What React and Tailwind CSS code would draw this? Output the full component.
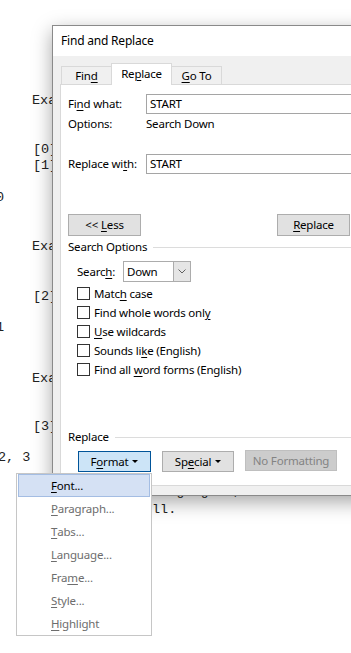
import React from "react";

const U = ({ children }) => (
  <span className="underline underline-offset-[2px] decoration-1">{children}</span>
);

const Check = ({ children }) => (
  <div className="flex items-center h-[19px]">
    <div className="w-[13px] h-[13px] border border-[#333333] bg-white" />
    <span className="ml-[4px]">{children}</span>
  </div>
);

const Caret = () => (
  <svg width="6" height="3" viewBox="0 0 6 3" className="ml-[4px]">
    <path d="M0 0h6L3 3z" fill="#000" />
  </svg>
);

function Document() {
  return (
    <div className="flex flex-col pt-[93px] font-['Liberation_Mono',monospace] text-[13.5px] leading-[16px] text-[#222] whitespace-pre">
      <div className="h-[16px] ml-[32px]">Exa</div>
      <div className="h-[16px] ml-[33px] mt-[33px]">[0]</div>
      <div className="h-[16px] ml-[33px]">[1]</div>
      <div className="h-[16px] ml-[-4px] mt-[16px]">0</div>
      <div className="h-[16px] ml-[32px] mt-[33px]">Exa</div>
      <div className="h-[16px] ml-[33px] mt-[34px]">[2]</div>
      <div className="h-[16px] ml-[-4px] mt-[15px]">1</div>
      <div className="h-[16px] ml-[32px] mt-[35px]">Exa</div>
      <div className="h-[16px] ml-[33px] mt-[32px]">[3]</div>
      <div className="h-[16px] ml-[-2px] mt-[15px]">2, 3</div>
      <div className="h-[16px] ml-[152px] mt-[18px]">language 0,</div>
      <div className="h-[16px] ml-[152px] mt-[2px]">ll.</div>
    </div>
  );
}

function Dialog() {
  return (
    <div className="absolute left-[52px] top-[25px] w-[330px] h-[471px] border border-[#8a8a8a] bg-[#f0f0f0] shadow-[0_6px_18px_rgba(0,0,0,0.35)] flex flex-col font-['Noto_Sans',sans-serif] text-[11.5px] tracking-[-0.2px] text-black">
      <div className="h-[30px] bg-white flex items-center pl-[8px] text-[12px]">Find and Replace</div>
      <div className="pt-[7px] flex flex-col">
        <div className="flex items-end ml-[8px] h-[21px]">
          <div className="w-[50px] h-[18px] border-l border-t border-[#d9d9d9] flex items-center justify-center">
            Fin<U>d</U>
          </div>
          <div className="relative z-10 w-[61px] h-[22px] -mb-px bg-white border border-b-0 border-[#d9d9d9] flex items-center justify-center pb-[2px]">
            Re<U>p</U>lace
          </div>
          <div className="w-[50px] h-[18px] border-t border-r border-[#d9d9d9] flex items-center justify-center">
            <U>G</U>o To
          </div>
        </div>
        <div className="ml-[7px] mr-[8px] h-[402px] bg-white border border-[#d9d9d9] pl-[7px] pt-[9px] flex flex-col">
          <div className="flex items-center h-[20px]">
            <span className="w-[78px]">Fi<U>n</U>d what:</span>
            <div className="flex-1 h-[20px] border border-[#a5a5a5] flex items-center pl-[3px]">START</div>
          </div>
          <div className="flex items-center h-[16px] mt-[2px]">
            <span className="w-[78px]">Options:</span>
            <span>Search Down</span>
          </div>
          <div className="flex items-center h-[20px] mt-[22px]">
            <span className="w-[78px]">Replace wi<U>t</U>h:</span>
            <div className="flex-1 h-[20px] border border-[#a5a5a5] flex items-center pl-[3px]">START</div>
          </div>
          <div className="flex mt-[40px]">
            <div className="w-[73px] h-[22px] bg-[#e1e1e1] border border-[#adadad] flex items-center justify-center">
              &lt;&lt; <span className="ml-[3px]"><U>L</U>ess</span>
            </div>
            <div className="ml-[136px] w-[73px] h-[22px] bg-[#e1e1e1] border border-[#adadad] flex items-center justify-center">
              <U>R</U>eplace
            </div>
          </div>
          <div className="flex items-center h-[16px] mt-[3px]">
            <span>Search Options</span>
            <div className="flex-1 h-px bg-[#dcdcdc] ml-[6px]" />
          </div>
          <div className="flex items-center h-[21px] mt-[6px] pl-[9px]">
            <span className="w-[46px]">Searc<U>h</U>:</span>
            <div className="w-[68px] h-[21px] border border-[#acacac] bg-white flex items-stretch">
              <span className="flex-1 flex items-center pl-[3px]">Down</span>
              <div className="w-[17px] bg-[#e5e5e5] border-l border-[#acacac] flex items-center justify-center">
                <svg width="8" height="5" viewBox="0 0 8 5">
                  <path d="M0.5 0.5L4 4L7.5 0.5" fill="none" stroke="#606060" strokeWidth="1" />
                </svg>
              </div>
            </div>
          </div>
          <div className="flex flex-col mt-[2px] pl-[9px]">
            <Check>Matc<U>h</U> case</Check>
            <Check>Find whole words onl<U>y</U></Check>
            <Check><U>U</U>se wildcards</Check>
            <Check>Sounds li<U>k</U>e (English)</Check>
            <Check>Find all <U>w</U>ord forms (English)</Check>
          </div>
          <div className="flex items-center h-[16px] mt-[50px]">
            <span>Replace</span>
            <div className="flex-1 h-px bg-[#dcdcdc] ml-[6px]" />
          </div>
          <div className="flex items-center mt-[6px] pl-[10px]">
            <div className="w-[73px] h-[21px] bg-[#cce4f7] border border-[#005499] flex items-center justify-center">
              F<U>o</U>rmat<Caret />
            </div>
            <div className="ml-[11px] w-[72px] h-[21px] bg-[#e1e1e1] border border-[#adadad] flex items-center justify-center">
              Sp<U>e</U>cial<Caret />
            </div>
            <div className="ml-[11px] w-[92px] h-[21px] -mt-[2px] bg-[#cccccc] border border-[#bfbfbf] text-[#838383] flex items-center justify-center">
              No Formatting
            </div>
          </div>
        </div>
      </div>
    </div>
  );
}

const menuItems = [
  [<><U>F</U>ont...</>, true],
  [<><U>P</U>aragraph...</>, false],
  [<><U>T</U>abs...</>, false],
  [<><U>L</U>anguage...</>, false],
  [<>Fra<U>m</U>e...</>, false],
  [<><U>S</U>tyle...</>, false],
  [<><U>H</U>ighlight</>, false],
];

function FormatMenu() {
  return (
    <div className="absolute left-[16px] top-[473px] w-[136px] border border-[#c6c6c6] bg-white px-px flex flex-col font-['Noto_Sans',sans-serif] text-[11.5px] tracking-[-0.2px]">
      {menuItems.map(([label, active], i) => (
        <div
          key={i}
          className={
            active
              ? "h-[23px] flex items-center pl-[32px] border border-[#a4bde3] bg-[#d5e1f4] text-black"
              : "h-[23px] flex items-center pl-[32px] border border-transparent text-[#6d6d6d]"
          }
        >
          {label}
        </div>
      ))}
    </div>
  );
}

export default function App() {
  return (
    <div className="relative w-[351px] h-[653px] bg-white overflow-hidden">
      <Document />
      <Dialog />
      <FormatMenu />
    </div>
  );
}
